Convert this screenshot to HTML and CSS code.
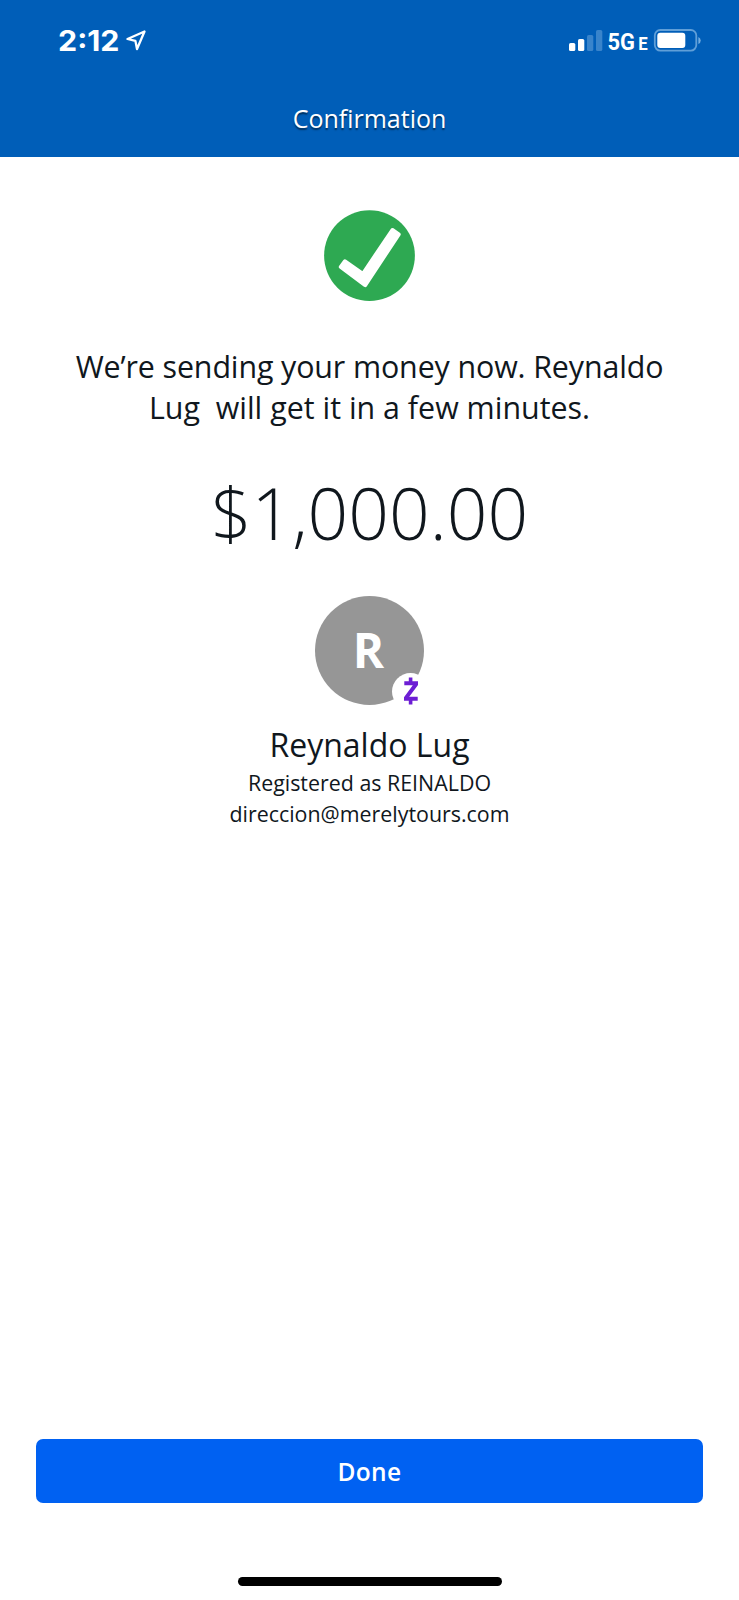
FILE: index.html
```html
<!DOCTYPE html>
<html lang="en">
<head>
<meta charset="utf-8">
<title>Confirmation</title>
<link rel="stylesheet" href="styles.css">
</head>
<body>
<div class="screen">
  <header class="header">
    <div class="status">
      <svg class="status-left" width="100" height="40" viewBox="50 20 100 40">
        <text class="clock" x="58" y="50.5" textLength="61.5" lengthAdjust="spacingAndGlyphs">2:12</text>
        <path class="arrow" d="M144.5 31.5 L127.5 39 L135.4 40.9 L137 49 Z"/>
      </svg>
      <svg class="status-right" width="140" height="40" viewBox="564 20 140 40">
        <g class="bars">
          <rect x="569" y="43" width="6.3" height="8" rx="1.6"/>
          <rect x="578" y="39" width="6.3" height="12" rx="1.6"/>
          <rect class="dim" x="587" y="35" width="6.3" height="16" rx="1.6"/>
          <rect class="dim" x="596" y="30" width="6.3" height="21" rx="1.6"/>
        </g>
        <text class="network" x="607.5" y="50" textLength="27.5" lengthAdjust="spacingAndGlyphs">5G</text>
        <text class="network small" x="638.2" y="50" textLength="9.4" lengthAdjust="spacingAndGlyphs">E</text>
        <rect class="battery" x="654.8" y="30" width="41.5" height="20.6" rx="5.5"/>
        <rect class="charge" x="657.3" y="32.8" width="28" height="15.2" rx="3"/>
        <path class="cap" d="M698.4 37v7q2.3-1 2.3-3.5t-2.3-3.5z"/>
      </svg>
    </div>
    <h1 class="title">Confirmation</h1>
  </header>
  <main class="content">
    <svg class="check" width="93" height="92" viewBox="0 0 93 92">
      <circle cx="46.5" cy="45.6" r="45.4"/>
      <path d="M17.8 57 L22 51.3 L39.8 64 L69.4 20 L75.7 24.3 L42.2 75.2 Z"/>
    </svg>
    <p class="message"><span class="lead">We’re sending your money now. Reynaldo</span><br>Lug&nbsp; will get it in a few minutes.</p>
    <p class="amount">$1,000.00</p>
    <div class="avatar">R
      <span class="badge">
        <svg width="16" height="28" viewBox="0 0 16 28"><path d="M5.8 0.5h3.6v3.7h5.6v3.7L6.2 19.8h8.5v4H9.4v3.7H5.8v-3.7H1v-3.6L9.8 8.3H1.3V4.2h4.5z"/></svg>
      </span>
    </div>
    <p class="name">Reynaldo Lug</p>
    <p class="detail registered">Registered as REINALDO</p>
    <p class="detail email">direccion@merelytours.com</p>
  </main>
  <footer class="footer">
    <button class="done">Done</button>
    <div class="home"></div>
  </footer>
</div>
</body>
</html>
```
FILE: styles.css
```css
* { box-sizing: border-box; margin: 0; padding: 0; }
body { background: #fff; color: #10171d; font-family: "Open Sans", sans-serif; }
.screen { width: 739px; height: 1600px; display: flex; flex-direction: column; overflow: hidden; }
.header { height: 157px; background: #005eb8; color: #fff; flex: none; }
.status { display: flex; justify-content: space-between; padding: 20px 35px 0 50px; height: 60px; }
.clock { font: 700 28px Inter, sans-serif; fill: #fff; }
.arrow { fill: none; stroke: #fff; stroke-width: 2.3; stroke-linejoin: round; }
.bars, .charge { fill: #fff; }
.bars .dim { fill: #3984cb; }
.network { font: 700 23.5px Roboto, sans-serif; fill: #fff; }
.network.small { font-size: 18px; }
.battery { fill: none; stroke: #609fd8; stroke-width: 1.8; }
.cap { fill: #75aee0; }
.title { margin-top: 38px; font-size: 25px; font-weight: 400; line-height: 40px; text-align: center; text-shadow: 0 1.5px 1.5px rgba(0,0,0,.5); }
.content { flex: 1; display: flex; flex-direction: column; align-items: center; text-align: center; padding-top: 52.5px; white-space: nowrap; }
.check { display: block; }
.check circle { fill: #2ea952; }
.check path { fill: #fff; stroke: #fff; stroke-width: 4; stroke-linejoin: round; }
.message { margin-top: 44.5px; font-size: 30.4px; line-height: 41px; }
.lead { letter-spacing: -.12px; }
.amount { margin-top: 35.5px; font-size: 71.3px; font-weight: 300; line-height: 98px; }
.avatar { position: relative; width: 109px; height: 109px; margin-top: 34px; padding-right: 2px; border-radius: 50%; background: #969696; color: #fff; font-size: 47.5px; font-weight: 700; line-height: 108px; }
.badge { position: absolute; left: 77px; top: 77px; width: 37px; height: 37px; border-radius: 50%; background: #fff; display: flex; align-items: center; justify-content: center; }
.badge svg { fill: #6d1ed4; }
.name { margin-top: 18px; font-size: 32px; line-height: 44px; }
.detail { font-size: 21.4px; line-height: 31.5px; }
.email { margin-top: -.5px; }
.footer { flex: none; height: 161px; display: flex; flex-direction: column; align-items: center; }
.done { width: 667px; height: 64px; padding-top: 1px; border: 0; border-radius: 7px; background: #0061f2; color: #fff; font: 550 24.5px/63px "Open Sans", sans-serif; letter-spacing: .3px; }
.home { width: 264px; height: 9px; margin-top: 73.5px; border-radius: 5px; background: #000; }
```
